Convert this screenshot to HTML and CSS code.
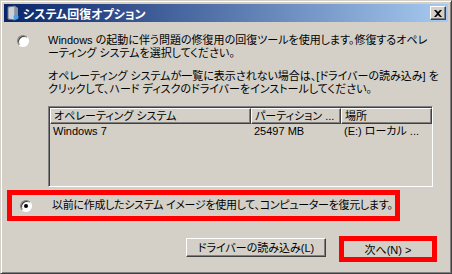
FILE: index.html
```html
<!DOCTYPE html>
<html lang="ja">
<head>
    <meta charset="UTF-8">
    <title>システム回復オプション</title>
    <link rel="stylesheet" href="styles.css">
</head>
<body>
<div class="window">
    <div class="titlebar">
        <svg class="title-icon" width="14" height="16" viewBox="0 0 14 16">
            <path d="M2 2 L9 1 L9 15 L2 14 Z" fill="#c8d0d8" stroke="#6a7480" stroke-width="1"/>
            <path d="M9 1 L12 3 L12 13 L9 15 Z" fill="#8a949e"/>
            <circle cx="10" cy="12" r="2.5" fill="#4aa0e8"/>
        </svg>
        <span class="title-text">システム回復オプション</span>
        <div class="close-btn">
            <svg width="8" height="7" viewBox="0 0 8 7"><path d="M0 0h2l2 2 2-2h2L5 3.5 8 7H6L4 5 2 7H0l3-3.5z" fill="#000"/></svg>
        </div>
    </div>

    <div class="content">
        <div class="option">
            <span class="radio"></span>
            <div class="option-body">
                <p class="text">Windows の起動に伴う問題の修復用の回復ツールを使用します。修復するオペレ<br>ーティング システムを選択してください。</p>
                <p class="text para2">オペレーティング システムが一覧に表示されない場合は、[ドライバーの読み込み] を<br>クリックして、ハード ディスクのドライバーをインストールしてください。</p>

                <div class="listbox">
                    <div class="list-header">
                        <div class="col col-os">オペレーティング システム</div>
                        <div class="col col-part">パーティション ...</div>
                        <div class="col col-loc">場所</div>
                    </div>
                    <div class="list-row">
                        <div class="cell col-os">Windows 7</div>
                        <div class="cell col-part">25497 MB</div>
                        <div class="cell col-loc">(E:) ローカル ...</div>
                    </div>
                </div>
            </div>
        </div>

        <div class="highlight option2">
            <span class="radio checked"></span>
            <span class="text tight">以前に作成したシステム イメージを使用して、コンピューターを復元します。</span>
        </div>

        <div class="buttons">
            <button class="btn btn-driver">ドライバーの読み込み(L)</button>
            <div class="highlight next-wrap">
                <button class="btn btn-next">次へ(N) &gt;</button>
            </div>
        </div>
    </div>
</div>
</body>
</html>
```

FILE: styles.css
```css
body {
  margin: 0;
  padding: 0;
  background-color: #d4d0c8;
  font-family: "Liberation Sans", "Noto Sans CJK JP", sans-serif;
  font-size: 11px;
  color: #000;
}

.window {
  width: 452px;
  height: 274px;
  box-sizing: border-box;
  background-color: #d4d0c8;
  border-top: 1px solid #d4d0c8;
  border-left: 1px solid #d4d0c8;
  border-right: 1px solid #404040;
  border-bottom: 1px solid #404040;
  box-shadow: inset 1px 1px 0 #fff, inset -1px -1px 0 #808080;
  padding: 3px;
  display: flex;
  flex-direction: column;
}

.titlebar {
  height: 18px;
  display: flex;
  align-items: center;
  background: linear-gradient(90deg, #0a246a, #a6caf0);
  padding: 0 2px 0 2px;
}

.title-icon {
  margin-right: 3px;
}

.title-text {
  flex-grow: 1;
  color: #fff;
  font-weight: bold;
  font-size: 12px;
  font-feature-settings: "palt";
  font-family: "Noto Sans CJK JP", sans-serif;
}

.close-btn {
  width: 16px;
  height: 14px;
  box-sizing: border-box;
  background-color: #d4d0c8;
  border-top: 1px solid #fff;
  border-left: 1px solid #fff;
  border-right: 1px solid #404040;
  border-bottom: 1px solid #404040;
  box-shadow: inset -1px -1px 0 #808080;
  display: flex;
  align-items: center;
  justify-content: center;
}

.content {
  flex-grow: 1;
  padding: 12px 0 0 3px;
  display: flex;
  flex-direction: column;
}

.text {
  margin: 0;
  line-height: 13px;
  white-space: nowrap;
  font-feature-settings: "palt";
}

.text.tight {
  letter-spacing: -0.3px;
}

.para2 {
  margin-top: 10px;
}

.option {
  display: flex;
  padding-left: 10px;
}

.option-body {
  margin-left: 19px;
}

.radio {
  width: 12px;
  height: 12px;
  box-sizing: border-box;
  border-radius: 50%;
  background-color: #fff;
  border: 1px solid;
  border-color: #808080 #fff #fff #808080;
  box-shadow: inset 1px 1px 0 #404040;
  flex-shrink: 0;
  margin-top: 1px;
  position: relative;
}

.radio.checked::after {
  content: "";
  position: absolute;
  left: 3px;
  top: 3px;
  width: 4px;
  height: 4px;
  border-radius: 50%;
  background-color: #000;
}

.listbox {
  margin-top: 10px;
  width: 385px;
  height: 81px;
  box-sizing: border-box;
  border-top: 1px solid #808080;
  border-left: 1px solid #808080;
  border-right: 1px solid #fff;
  border-bottom: 1px solid #fff;
  box-shadow: inset 1px 1px 0 #404040;
  padding: 1px 0 0 1px;
}

.list-header {
  display: flex;
  height: 16px;
}

.col {
  box-sizing: border-box;
  height: 16px;
  line-height: 14px;
  padding-left: 3px;
  white-space: nowrap;
  overflow: hidden;
  border-top: 1px solid #fff;
  border-left: 1px solid #fff;
  border-right: 1px solid #404040;
  border-bottom: 1px solid #404040;
  box-shadow: inset -1px -1px 0 #808080;
  font-feature-settings: "palt";
}

.col-os { width: 201px; }
.col-part { width: 90px; }
.col-loc { width: 91px; }

.list-row {
  display: flex;
  height: 15px;
  line-height: 15px;
}

.cell {
  padding-left: 3px;
  box-sizing: border-box;
  white-space: nowrap;
  font-feature-settings: "palt";
}

.highlight {
  border: 5px solid #ff0000;
  box-sizing: border-box;
}

.option2 {
  margin-top: 3px;
  width: 393px;
  height: 31px;
  display: flex;
  align-items: center;
  padding-left: 8px;
}

.option2 .radio {
  margin-top: 0;
  margin-right: 20px;
}

.buttons {
  display: flex;
  justify-content: flex-end;
  align-items: center;
  margin-top: 15px;
  padding-right: 11px;
}

.btn {
  font-family: "Liberation Sans", "Noto Sans CJK JP", sans-serif;
  font-size: 11px;
  font-feature-settings: "palt";
  background-color: #d4d0c8;
  border-top: 1px solid #fff;
  border-left: 1px solid #fff;
  border-right: 1px solid #404040;
  border-bottom: 1px solid #404040;
  box-shadow: inset -1px -1px 0 #808080;
  padding: 0;
  margin: 0;
  color: #000;
}

.btn-driver {
  width: 140px;
  height: 19px;
  margin-top: -4px;
  margin-right: 13px;
}

.next-wrap {
  width: 98px;
  height: 26px;
  display: flex;
}

.btn-next {
  flex-grow: 1;
  height: 16px;
  border: none;
  box-shadow: none;
}
```
